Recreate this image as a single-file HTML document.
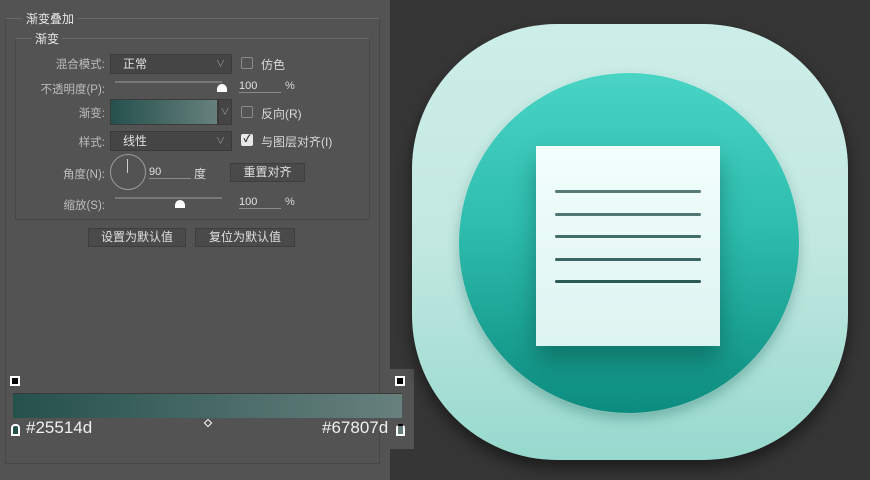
<!DOCTYPE html><html><head><meta charset="utf-8"><style>
*{margin:0;padding:0;box-sizing:border-box}
body{width:870px;height:480px;background:#363636;position:relative;overflow:hidden;font-family:"Liberation Sans","Noto Sans CJK SC",sans-serif;font-size:12px;color:#d8d8d8}
.a{position:absolute}
.lbl{position:absolute;text-align:right;width:100px;color:#bdbdbd;font-size:11.5px}
.sel{position:absolute;background:#454545;border:1px solid #3a3a3a;height:20px;color:#e0e0e0;padding-left:12px;line-height:18px}
.chk{position:absolute;width:12px;height:12px;border:1px solid #8a8a8a;border-radius:2px}
.btn{position:absolute;background:#4a4a4a;border:1px solid #3e3e3e;height:19px;line-height:17px;text-align:center;color:#e0e0e0;font-size:12px}
.ul{position:absolute;border-bottom:1px solid #8a8a8a;color:#e0e0e0;font-size:11px}
</style></head><body>
<div class="a" style="left:0;top:0;width:390px;height:480px;background:#535353"></div>
<div class="a" style="left:388px;top:369px;width:26px;height:80px;background:#535353"></div>
<div class="a" style="left:5px;top:18px;width:375px;height:446px;border:1px solid #474747;border-top:1px solid #6a6a6a"></div>
<div class="a" style="left:22px;top:10px;background:#535353;padding:0 4px;color:#e8e8e8;font-size:12px">渐变叠加</div>
<div class="a" style="left:15px;top:38px;width:355px;height:182px;border:1px solid #474747;border-top:1px solid #6a6a6a"></div>
<div class="a" style="left:32px;top:30px;background:#535353;padding:0 3px;color:#e8e8e8">渐变</div>
<div class="lbl" style="left:5px;top:56px">混合模式:</div>
<div class="sel" style="left:110px;top:54px;width:122px">正常<span style="position:absolute;right:6px;color:#999;font-size:9px">∨</span></div>
<div class="chk" style="left:241px;top:57px"></div><div class="a" style="left:261px;top:56px">仿色</div>
<div class="lbl" style="left:5px;top:81px">不透明度(P):</div>
<div class="a" style="left:115px;top:81px;width:107px;height:2px;background:#777"></div>
<div class="a" style="left:217px;top:84px;width:10px;height:8px;background:#fff;border-radius:5px 5px 0 0"></div>
<div class="ul" style="left:239px;top:80px;width:42px">100</div><div class="a" style="left:285px;top:80px;font-size:11px">%</div>
<div class="lbl" style="left:5px;top:105px">渐变:</div>
<div class="a" style="left:110px;top:99px;width:108px;height:26px;background:linear-gradient(90deg,#25514d,#67807d);border:1px solid #3a3a3a"></div>
<div class="a" style="left:218px;top:99px;width:14px;height:26px;background:#454545;border:1px solid #3a3a3a;color:#999;font-size:9px;text-align:center;line-height:24px">∨</div>
<div class="chk" style="left:241px;top:106px"></div><div class="a" style="left:261px;top:105px">反向(R)</div>
<div class="lbl" style="left:5px;top:134px">样式:</div>
<div class="sel" style="left:110px;top:131px;width:122px">线性<span style="position:absolute;right:6px;color:#999;font-size:9px">∨</span></div>
<div class="chk" style="left:241px;top:134px;background:#e8e8e8;border-color:#e8e8e8;color:#333;font-size:10px;line-height:10px;text-align:center;font-weight:bold">✓</div>
<div class="a" style="left:261px;top:133px">与图层对齐(I)</div>
<div class="lbl" style="left:5px;top:166px">角度(N):</div>
<div class="a" style="left:110px;top:154px;width:36px;height:36px;border:1px solid #9a9a9a;border-radius:50%"></div>
<div class="a" style="left:127px;top:159px;width:1px;height:14px;background:#ccc"></div>
<div class="ul" style="left:149px;top:166px;width:42px">90</div><div class="a" style="left:194px;top:165px">度</div>
<div class="btn" style="left:230px;top:163px;width:75px">重置对齐</div>
<div class="lbl" style="left:5px;top:197px">缩放(S):</div>
<div class="a" style="left:115px;top:197px;width:107px;height:2px;background:#777"></div>
<div class="a" style="left:175px;top:200px;width:10px;height:8px;background:#fff;border-radius:5px 5px 0 0"></div>
<div class="ul" style="left:239px;top:196px;width:42px">100</div><div class="a" style="left:285px;top:196px;font-size:11px">%</div>
<div class="btn" style="left:88px;top:228px;width:98px">设置为默认值</div>
<div class="btn" style="left:195px;top:228px;width:100px">复位为默认值</div>
<div class="a" style="left:10px;top:376px;width:10px;height:10px;background:#000;border:2px solid #fff"></div>
<div class="a" style="left:395px;top:376px;width:10px;height:10px;background:#000;border:2px solid #fff"></div>
<div class="a" style="left:13px;top:393px;width:389px;height:25px;background:linear-gradient(90deg,#25514d,#67807d);border-top:1px solid #3a3a3a"></div>
<div class="a" style="left:205px;top:420px;width:6px;height:6px;border:1px solid #fff;transform:rotate(45deg)"></div>
<div class="a" style="left:11px;top:424px;width:9px;height:12px;background:#25514d;border:2px solid #fff;border-radius:4px 4px 0 0"></div>
<div class="a" style="left:396px;top:424px;width:9px;height:12px;background:#67807d;border:2px solid #fff;border-top-color:#000;border-radius:4px 4px 0 0"></div>
<div class="a" style="left:26px;top:418px;font-size:17px;color:#f0f0f0">#25514d</div>
<div class="a" style="left:322px;top:418px;font-size:17px;color:#f0f0f0">#67807d</div>
<div class="a" style="left:412px;top:24px;width:436px;height:436px;border-radius:145px;background:linear-gradient(#cdeee8,#c2e8e1 50%,#97d9ce);box-shadow:0 8px 16px rgba(0,0,0,.5)"></div>
<div class="a" style="left:458px;top:72px;width:342px;height:342px;border-radius:50%;background:rgba(255,255,255,.2)"></div>
<div class="a" style="left:459px;top:73px;width:340px;height:340px;border-radius:50%;background:linear-gradient(#49d4c5,#2ebdae 45%,#0c8c7e);box-shadow:0 6px 12px rgba(0,80,70,.3)"></div>
<div class="a" style="left:536px;top:146px;width:184px;height:200px;background:linear-gradient(#f3fefc,#dcf4f1);box-shadow:0 14px 22px rgba(0,60,50,.4)"></div>
<div class="a" style="left:555px;top:190px;width:146px;height:3px;border-radius:2px;background:#577b78"></div>
<div class="a" style="left:555px;top:213px;width:146px;height:3px;border-radius:2px;background:#507774"></div>
<div class="a" style="left:555px;top:235px;width:146px;height:3px;border-radius:2px;background:#436f6b"></div>
<div class="a" style="left:555px;top:258px;width:146px;height:3px;border-radius:2px;background:#3a6763"></div>
<div class="a" style="left:555px;top:280px;width:146px;height:3px;border-radius:2px;background:#2c5a56"></div>
</body></html>
